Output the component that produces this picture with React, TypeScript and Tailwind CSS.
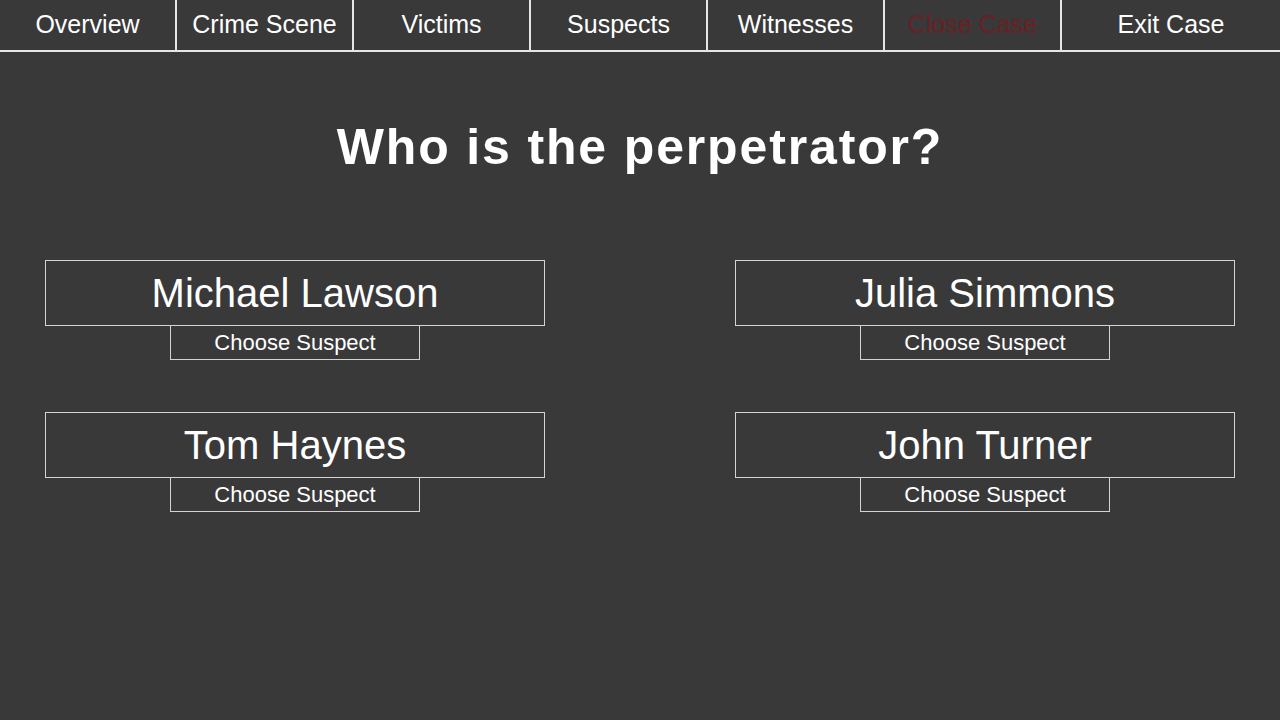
import React from "react";

const tabs = ["Overview", "Crime Scene", "Victims", "Suspects", "Witnesses", "Close Case"];
const suspects = ["Michael Lawson", "Julia Simmons", "Tom Haynes", "John Turner"];

function SuspectCard({ name }: { name: string }) {
  return (
    <div className="flex flex-col items-center">
      <div className="w-[500px] h-[66px] border border-[#d4d4d4] flex items-center justify-center text-[40px] text-white">
        {name}
      </div>
      <button
        type="button"
        className="w-[250px] h-[35px] -mt-px border border-[#d4d4d4] flex items-center justify-center text-[22px] text-white"
      >
        Choose Suspect
      </button>
    </div>
  );
}

export default function App() {
  return (
    <div
      className="w-[1280px] h-[720px] bg-[#393939] overflow-hidden"
      style={{ fontFamily: '"Liberation Sans", Arial, sans-serif' }}
    >
      <nav className="flex h-[52px] border-b-2 border-[#e6e6e6]">
        {tabs.map((t) => (
          <div
            key={t}
            className={
              "w-[177px] shrink-0 border-r-2 border-[#e6e6e6] flex items-center justify-center text-[25px] " +
              (t === "Close Case" ? "text-[#6a2024]" : "text-white")
            }
          >
            {t}
          </div>
        ))}
        <div className="flex-1 flex items-center justify-center text-[25px] text-white">Exit Case</div>
      </nav>

      <h1 className="mt-[65px] text-center text-[50px] leading-[60px] font-bold tracking-[0.037em] text-white">
        Who is the perpetrator?
      </h1>

      <div className="mt-[83px] px-[45px] grid grid-cols-2 gap-x-[190px] gap-y-[52px]">
        {suspects.map((s) => (
          <SuspectCard key={s} name={s} />
        ))}
      </div>
    </div>
  );
}
